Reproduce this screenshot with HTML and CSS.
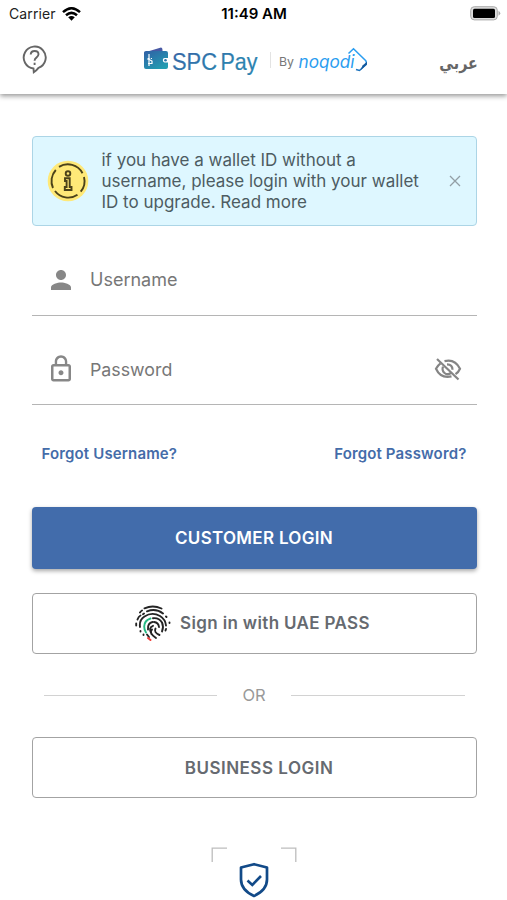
FILE: index.html
```html
<!DOCTYPE html>
<html lang="en">
<head>
<meta charset="utf-8">
<title>SPC Pay</title>
<link rel="stylesheet" href="styles.css">
</head>
<body>
<header class="top">
  <div class="status">
    <div class="carrier"><span>Carrier</span>
      <svg width="19" height="14" viewBox="0 0 19 14"><g fill="none" stroke="#000" stroke-width="2.5"><path d="M1 5.2Q9.500-2.600 18 5.200"/><path d="M4 8.300Q9.500 3.400 15 8.300"/></g><path d="M6.200 10.300Q9.500 7.600 12.800 10.300L9.500 13.700Z"/></svg>
    </div>
    <time>11:49 AM</time>
    <svg class="battery" width="31" height="15" viewBox="0 0 31 15"><rect x=".7" y=".7" width="26.600" height="13.200" rx="3.600" fill="#ddd" stroke="#aaa"/><rect x="3" y="2.700" width="22" height="9.300" rx="1.500"/><path d="M28.500 4.800Q32 7.300 28.500 9.800Z" fill="#aaa"/></svg>
  </div>
  <nav class="bar">
    <svg class="help" width="26" height="29" viewBox="0 0 26 29" fill="none" stroke="#666" stroke-width="1.900"><path d="M11.500 23.500A11 11 0 1 1 16.500 22.900Q14.500 25.500 11.800 27.300Z"/><path d="M8.700 9.500Q8.900 6 12.600 6Q16.500 6 16.500 9.300Q16.500 11.200 14.400 12.600Q12.600 13.800 12.600 15.700"/><path d="M12.600 17.700V20"/></svg>
    <svg class="logo" width="226" height="34" viewBox="0 0 226 34">
      <defs><linearGradient id="w" x1="0" y1="0" x2=".7" y2="1"><stop stop-color="#315fa5"/><stop offset="1" stop-color="#219db1"/></linearGradient>
      <linearGradient id="t" gradientUnits="userSpaceOnUse" x1="30" y1="8" x2="45" y2="40"><stop stop-color="#3862a5"/><stop offset="1" stop-color="#2c83b0"/></linearGradient>
      <linearGradient id="n" x1="0" y1="0" x2="0" y2="1"><stop offset=".55" stop-color="#2a9df0"/><stop offset="1" stop-color="#1b72bd"/></linearGradient></defs>
      <path d="M3 8L18 3.500Q19.500 3.400 19.500 6V8Z" fill="#4859a4"/><path d="M1 8.500Q1 7 3 7H23Q25 7 25 9V14H21.500Q19.800 14 19.800 16T21.500 18.500H25V23Q25 25 23 25H3Q1 25 1 23Z" fill="url(#w)"/><circle cx="22.500" cy="16.300" r="1.300" fill="#2878aa"/><path d="M6 10V22M4.300 14.800L7 15.500M5 19.500H9V17L7 16M8.400 14V15" fill="none" stroke="#fff" stroke-width="1.200"/>
      <text class="spc" x="29" y="25.500" textLength="45" lengthAdjust="spacingAndGlyphs" fill="url(#t)">SPC</text><text class="spc" x="77.500" y="25.500" textLength="37" lengthAdjust="spacingAndGlyphs" fill="url(#t)">Pay</text>
      <path d="M127.500 8V24" stroke="#e3e3e3"/>
      <text class="by" x="136" y="22" textLength="15" lengthAdjust="spacingAndGlyphs">By</text>
      <text class="noqodi" x="155.500" y="23.500" textLength="56" lengthAdjust="spacingAndGlyphs">noqodi</text>
      <path d="M205.500 9.500L210.500 4.700L222.800 16.800Q224 18.500 223 20.500L216.500 26.500L213 25.500" fill="none" stroke="url(#n)" stroke-width="1.500"/><path d="M219.500 21.500L224 17.700V20.500L217.500 26.200Z" fill="#14599d"/>
    </svg>
    <a class="arabic" lang="ar">عربي</a>
  </nav>
</header>
<main>
  <section class="notice">
    <svg class="info" width="42" height="42" viewBox="0 0 42 42" fill="none" stroke="#4b421a" stroke-width="1.900"><circle cx="21" cy="21" r="20.300" fill="#ffe978" stroke="none"/><path d="M12 6.900A16.500 16.500 0 0 1 35.500 13.200M37 17A16.500 16.500 0 0 1 33.700 31.700M30.500 34.700A16.500 16.500 0 0 1 8 31M6 28A16.500 16.500 0 0 1 8.800 10"/><circle cx="21" cy="13.500" r="2.300"/><path d="M18 18.300H22.700V27H24.500V30H17.800V27H19.600V21H18Z"/></svg>
    <p>if you have a wallet ID without a<br>username, please login with your wallet<br>ID to upgrade. Read more</p>
    <svg class="close" width="12" height="12" viewBox="0 0 12 12"><path d="M1 1L11 11M11 1L1 11" stroke="#929fa5" stroke-width="1.300"/></svg>
  </section>
  <div class="field">
    <svg class="lead" width="30" height="30" viewBox="0 0 24 24" fill="#878787"><path d="M12 12c2.210 0 4-1.790 4-4s-1.790-4-4-4-4 1.790-4 4 1.790 4 4 4zm0 2c-2.670 0-8 1.340-8 4v2h16v-2c0-2.660-5.330-4-8-4z"/></svg>
    <span class="user">Username</span>
  </div>
  <div class="field second">
    <svg class="lead" width="30" height="30" viewBox="0 0 24 24" fill="#878787"><path d="M12 17c1.100 0 2-.9 2-2s-.9-2-2-2-2 .9-2 2 .9 2 2 2zm6-9h-1V6c0-2.760-2.240-5-5-5S7 3.240 7 6v2H6c-1.100 0-2 .9-2 2v10c0 1.100.9 2 2 2h12c1.100 0 2-.9 2-2V10c0-1.100-.9-2-2-2zM8.900 6c0-1.710 1.390-3.100 3.100-3.100s3.100 1.390 3.100 3.100v2H8.900V6zM18 20H6V10h12v10z"/></svg>
    <span class="pass">Password</span>
    <svg class="eye" width="28" height="26" viewBox="0 0 28 26" fill="none" stroke="#858585" stroke-width="2.200"><path d="M3 3L24.500 23.500"/><path d="M10.500 5.100Q21 2.500 26 12.700Q24.500 16.200 21.500 18.200M17.500 20.400Q6.500 22.700 2 12.700Q3.800 9.300 6.500 7.300"/><path d="M13 8.300Q18.500 8.300 18.500 13.800M9 10.600Q7.500 14.500 10.500 17T17 17"/></svg>
  </div>
  <div class="links"><a>Forgot Username?</a><a>Forgot Password?</a></div>
  <button class="primary">CUSTOMER LOGIN</button>
  <button class="outline uae">
    <svg width="36" height="36" viewBox="0 0 36 36" fill="none" stroke="#242424" stroke-width="1.900" stroke-linecap="round"><path d="M9.500 3.300Q18-.5 26.500 3.500M5 7.500Q6 6 7 5.500M12 6.300Q21 3 28 8.500M8 9.200L9 8.500M31 11.500L31.500 12M2.500 14.500Q3.500 11.500 5.500 10.500M1.200 18.500V20.500M5 22Q4 15 9.500 11.500Q17 6.500 25 11Q30.500 14.500 31 20.500M34.500 17.500V18M31 24L30.500 25.500M5.500 26V26.500"/><path d="M18 13.200Q24 12.500 27 17.500Q29 22 27 26.500M19 17Q23.500 17.500 24 22M13 24.500Q12.500 18 17.500 17M16.500 29Q13 22.500 18 20.800M21 33Q13.500 28 17 24.500M24.500 30Q18.500 27.500 20.500 23.500M8.500 29.500V30M12 29.500L14 32"/><path d="M15.500 13.500Q9.300 15.500 9.200 21.500Q9.200 25 11 27.500" stroke="#25ba83"/><path d="M13 33L15.500 35" stroke="#f03e39" stroke-width="2"/></svg>
    <span>Sign in with UAE PASS</span>
  </button>
  <div class="divider"><span>OR</span></div>
  <button class="outline business">BUSINESS LOGIN</button>
  <svg class="secure" width="86" height="53" viewBox="0 0 86 53" fill="none"><path d="M1.200 15V1.200H16M70 1.200H84.800V15" stroke="#bdbdbd" stroke-width="1.300"/><path d="M43 17.200L56 20.500V32.500Q56 43 43 49Q30 43 30 32.500V20.500Z" stroke="#124a88" stroke-width="2.700" stroke-linejoin="round"/><path d="M36.500 33.500L41.300 38L50 29" stroke="#124a88" stroke-width="2.600"/></svg>
</main>
</body>
</html>
```
FILE: styles.css
```css
* { box-sizing: border-box; }
body { margin: 0; height: 900px; overflow: hidden; background: #fff; font-family: Inter, "Liberation Sans", sans-serif; color: #5c6269; }
svg { display: block; flex: none; }
.top { height: 94px; background: #fff; box-shadow: 0 2px 5px rgba(0,0,0,.42); }
.status { height: 27px; display: grid; grid-template-columns: 1fr auto 1fr; align-items: center; padding: 0 6px 0 7px; color: #000; font-size: 14px; }
.carrier { display: flex; gap: 6px; align-items: center; padding-left: 2px; color: #222; letter-spacing: .1px; }
.status time { font-size: 15px; font-weight: 600; }
.battery { justify-self: end; }
.bar { height: 67px; display: flex; padding: 0 29px 0 22px; }
.help { margin-top: 18px; }
.logo { margin: 17px 0 0 95px; }
.spc { font: 24px "Liberation Sans", sans-serif; stroke: #347fb0; stroke-width: .2px; }
.by { font: 12px Inter, sans-serif; fill: #777; }
.noqodi { font: italic 17px Inter, sans-serif; fill: #2a9df0; }
.arabic { margin: 23px 0 0 auto; font: bold 17px/26px "DejaVu Sans", sans-serif; color: #666; transform: scaleX(.84); transform-origin: right; }
main { padding: 42px 30.5px 0 31.5px; display: flex; flex-direction: column; }
.notice { height: 90px; border: 1px solid #acd5e6; border-radius: 4px; background: #def7ff; display: flex; align-items: center; padding: 0 15px 0 14px; }
.notice p { margin: 0 0 0 13px; font-size: 17px; line-height: 21px; color: #4d5c62; white-space: nowrap; }
.close { margin-left: auto; }
.field { height: 90px; border-bottom: 1px solid #b5b5b5; display: flex; align-items: center; padding: 18px 15px 0 14px; font-size: 18px; color: #777; }
.field.second { height: 89px; font-size: 17.8px; }
.field span { margin-left: 14.5px; }
.eye { margin-left: auto; }
.links { height: 102px; padding: 39px 10px 0 10px; display: flex; justify-content: space-between; font-size: 15px; line-height: 20px; font-weight: 600; letter-spacing: .15px; color: #446ca9; }
button { font: 600 17px Inter, sans-serif; border-radius: 4px; padding: 0; display: flex; align-items: center; justify-content: center; letter-spacing: .3px; }
.primary { height: 62px; border: 0; background: #426cab; color: #fff; box-shadow: 0 2px 4px rgba(0,0,0,.35); }
.outline { height: 61px; background: #fff; color: #666a70; border: 1px solid #a3a3a3; }
.uae { margin-top: 24px; gap: 9px; padding: 0 3px 2px 0; letter-spacing: .35px; }
.business { letter-spacing: .5px; padding-left: 10px; }
.divider { height: 83px; padding: 0 12px; display: flex; align-items: center; gap: 25px; font-size: 16.5px; color: #999; }
.divider span { margin-top: -2px; }
.divider::before, .divider::after { content: ""; height: 1px; flex: 1; background: #d2d2d2; }
.secure { align-self: center; margin-top: 49px; }
```
